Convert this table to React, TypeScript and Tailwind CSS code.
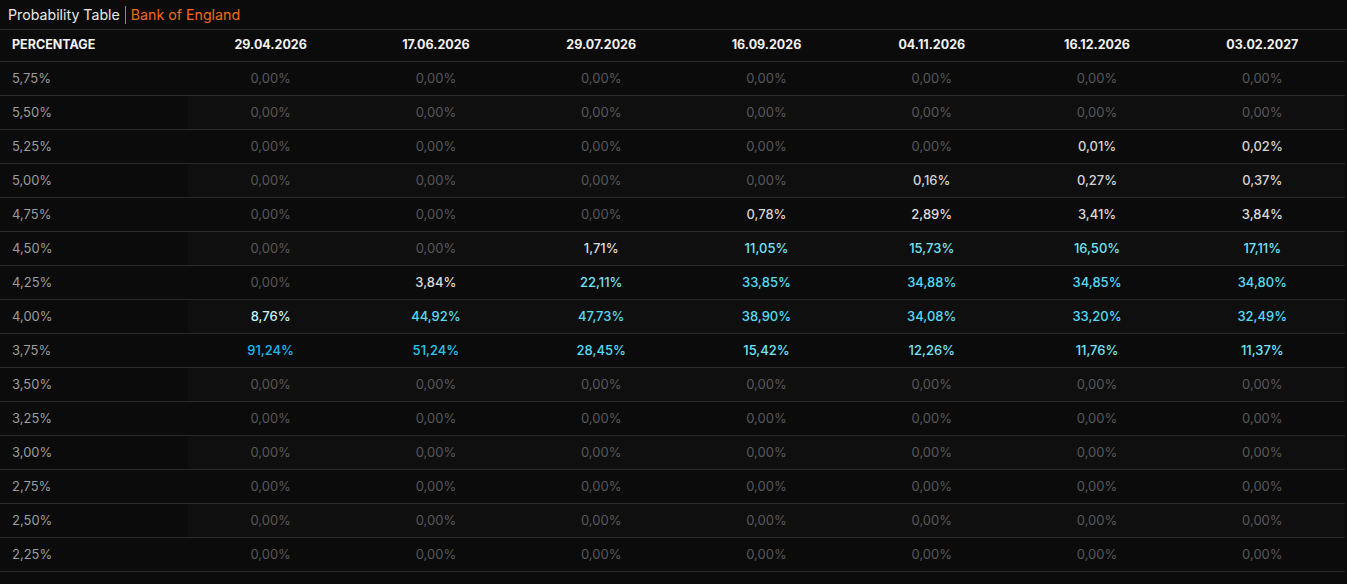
const dates = ['29.04.2026', '17.06.2026', '29.07.2026', '16.09.2026', '04.11.2026', '16.12.2026', '03.02.2027']

const rows: [string, number[]][] = [
  ['5,75%', [0, 0, 0, 0, 0, 0, 0]],
  ['5,50%', [0, 0, 0, 0, 0, 0, 0]],
  ['5,25%', [0, 0, 0, 0, 0, 0.01, 0.02]],
  ['5,00%', [0, 0, 0, 0, 0.16, 0.27, 0.37]],
  ['4,75%', [0, 0, 0, 0.78, 2.89, 3.41, 3.84]],
  ['4,50%', [0, 0, 1.71, 11.05, 15.73, 16.5, 17.11]],
  ['4,25%', [0, 3.84, 22.11, 33.85, 34.88, 34.85, 34.8]],
  ['4,00%', [8.76, 44.92, 47.73, 38.9, 34.08, 33.2, 32.49]],
  ['3,75%', [91.24, 51.24, 28.45, 15.42, 12.26, 11.76, 11.37]],
  ['3,50%', [0, 0, 0, 0, 0, 0, 0]],
  ['3,25%', [0, 0, 0, 0, 0, 0, 0]],
  ['3,00%', [0, 0, 0, 0, 0, 0, 0]],
  ['2,75%', [0, 0, 0, 0, 0, 0, 0]],
  ['2,50%', [0, 0, 0, 0, 0, 0, 0]],
  ['2,25%', [0, 0, 0, 0, 0, 0, 0]],
]

function tone(v: number) {
  if (v === 0) return 'text-[#585858]'
  if (v < 1) return 'text-[#d4d4d4]'
  if (v < 5) return 'text-[#dcdcdc]'
  if (v < 10) return 'text-[#c4f3fa]'
  if (v < 25) return 'text-[#74e3f5]'
  if (v < 50) return 'text-[#55dbf3]'
  if (v < 60) return 'text-[#2ec4f0]'
  return 'text-[#22b8ee]'
}

function fmt(v: number) {
  return v.toFixed(2).replace('.', ',') + '%'
}

export default function App() {
  return (
    <div className="w-[1347px] h-[584px] bg-[#0b0b0b] font-['Inter',sans-serif] overflow-hidden">
      <div className="h-[30px] flex items-center px-2 text-[14.2px] border-b border-[#2a2a2a]">
        <span className="text-[#e8e8e8]">Probability Table</span>
        <span className="mx-[5px] h-[18px] w-px bg-[#f26a1b]" />
        <span className="text-[#f26a1b]">Bank of England</span>
      </div>
      <div className="w-[1345px]">
        <div className="flex h-[32px] items-center border-b border-[#2a2a2a] text-[12.5px] font-bold text-[#f2f2f2]">
          <div className="w-[188px] pl-3">PERCENTAGE</div>
          {dates.map((d) => (
            <div key={d} className="flex-1 text-center">{d}</div>
          ))}
        </div>
        {rows.map(([label, vals], i) => (
          <div key={label} className="flex h-[34px] border-b border-[#2a2a2a] text-[13px]">
            <div className="w-[188px] pl-3 flex items-center text-[#9c9c9c]">{label}</div>
            <div className={`flex flex-1 ${i % 2 === 1 ? 'bg-[#0f0f0f]' : ''}`}>
              {vals.map((v, j) => (
                <div key={j} className={`flex-1 flex items-center justify-center ${v > 0 ? 'font-medium' : ''} ${tone(v)}`}>
                  {fmt(v)}
                </div>
              ))}
            </div>
          </div>
        ))}
      </div>
    </div>
  )
}
